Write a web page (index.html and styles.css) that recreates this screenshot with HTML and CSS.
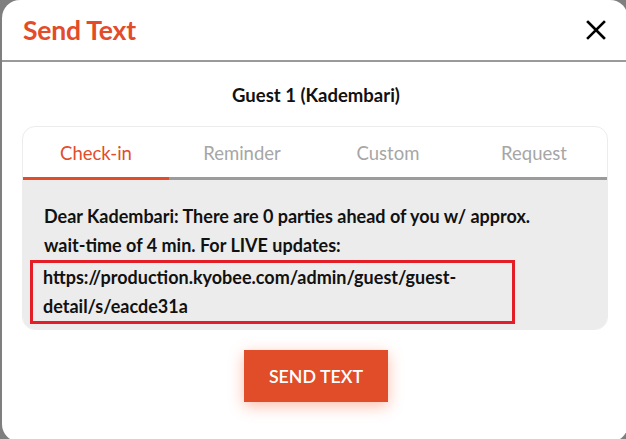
FILE: index.html
```html
<!DOCTYPE html>
<html>
<head>
<meta charset="utf-8">
<link rel="stylesheet" href="styles.css">
</head>
<body>
<div class="modal">
  <div class="header">
    <h1 class="title">Send Text</h1>
    <svg class="close" width="20" height="20" viewBox="0 0 20 20"><path d="M2 2 L18 18 M18 2 L2 18" stroke="#000" stroke-width="2.6" stroke-linecap="square"/></svg>
  </div>
  <div class="body">
    <div class="guest">Guest 1 (Kadembari)</div>
    <div class="card">
      <div class="tabs">
        <div class="tab active">Check-in</div>
        <div class="tab">Reminder</div>
        <div class="tab">Custom</div>
        <div class="tab">Request</div>
      </div>
      <div class="content">
        <p class="msg">Dear Kadembari: There are 0 parties ahead of you w/ approx. wait-time of 4 min. For LIVE updates:</p>
        <div class="link">https://production.kyobee.com/admin/guest/guest-detail/s/eacde31a</div>
      </div>
    </div>
    <div class="actions">
      <button class="send">SEND TEXT</button>
    </div>
  </div>
</div>
</body>
</html>
```
FILE: styles.css
```css
html, body {
  margin: 0;
  padding: 0;
  background: #7f7f7f;
  overflow: hidden;
  width: 626px;
  height: 439px;
}
body {
  font-family: Lato, "Noto Sans", sans-serif;
}
.modal {
  margin-left: 2px;
  width: 626px;
  height: 442px;
  background: #fff;
  border-radius: 18px;
}
.header {
  height: 60px;
  border-bottom: 2px solid #9a9a9a;
  display: flex;
  align-items: center;
  justify-content: space-between;
  padding: 0 22px 0 21px;
}
.title {
  margin: 0;
  font-size: 26.5px;
  font-weight: 700;
  color: #e34c2a;
  letter-spacing: -0.2px;
}
.body {
  padding: 0 20px;
}
.guest {
  text-align: center;
  font-size: 18.5px;
  font-weight: 700;
  color: #111;
  padding-top: 22px;
  height: 42px;
  box-sizing: border-box;
  height: 64px;
  margin-left: 2px;
}
.card {
  border: 1px solid #ececec;
  border-radius: 13px;
  overflow: hidden;
}
.tabs {
  display: flex;
  height: 50px;
  border-bottom: 3px solid #9b9b9b;
}
.tab {
  flex: 1;
  text-align: center;
  font-size: 18.5px;
  color: #a6a6a6;
  line-height: 52px;
  position: relative;
}
.tab.active {
  color: #e34c2a;
}
.tab.active::after {
  content: "";
  position: absolute;
  left: 0;
  right: 0;
  bottom: -3px;
  height: 3px;
  background: #e34c2a;
}
.content {
  background: #ececec;
  padding: 22px 10px 5px 21px;
}
.msg {
  margin: 0;
  font-size: 18px;
  font-weight: 700;
  line-height: 29px;
  color: #111;
  width: 530px;
}
.link {
  width: 469px;
  margin-left: -14px;
  padding: 0 0 0 10px;
  border: 3px solid #e41e26;
  font-size: 18px;
  font-weight: 700;
  line-height: 29px;
  color: #111;
}
.actions {
  display: flex;
  justify-content: center;
  padding-top: 20px;
}
.send {
  width: 144px;
  height: 52px;
  border: none;
  background: #e14c29;
  color: #fff;
  font-family: Lato, "Noto Sans", sans-serif;
  font-size: 17.8px;
  font-weight: 600;
  box-shadow: 0 4px 14px rgba(255, 110, 70, 0.45);
  margin-left: 2px;
}
```
